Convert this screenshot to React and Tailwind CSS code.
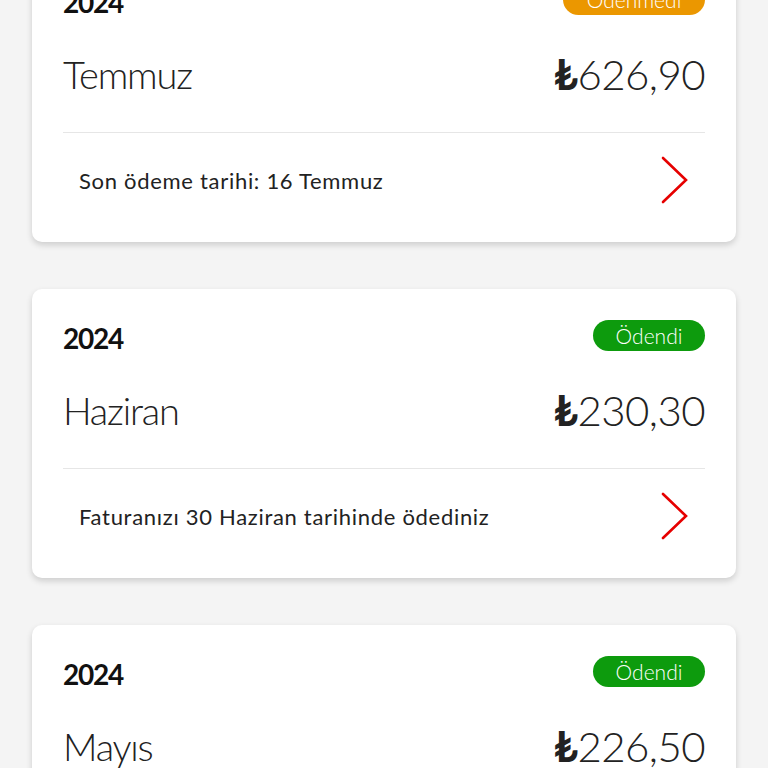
import { Fragment } from 'react'

const bills = [
  { year: '2024', month: 'Temmuz', amount: '626,90', paid: false, note: 'Son ödeme tarihi: 16 Temmuz' },
  { year: '2024', month: 'Haziran', amount: '230,30', paid: true, note: 'Faturanızı 30 Haziran tarihinde ödediniz' },
  { year: '2024', month: 'Mayıs', amount: '226,50', paid: true, note: 'Faturanızı 31 Mayıs tarihinde ödediniz' },
]

function Chevron() {
  return (
    <svg width="30" height="50" viewBox="0 0 30 50" fill="none" className="shrink-0">
      <path d="M3 3 L26 25 L3 47" stroke="#e60000" strokeWidth="2.6" strokeLinecap="round" strokeLinejoin="miter" />
    </svg>
  )
}

function BillCard({ bill }) {
  return (
    <div className="h-[289px] shrink-0 rounded-[10px] bg-white px-[31px] pt-[31px] shadow-[0_3px_6px_rgba(0,0,0,0.16)]">
      <div className="flex h-[31px] items-center justify-between">
        <p className="mt-[5px] text-[28px] leading-none font-bold tracking-[-1.2px] text-[#111]">{bill.year}</p>
        <span
          className={
            bill.paid
              ? 'flex h-[31px] w-[112px] items-center justify-center rounded-full bg-[#0d9b0d] text-[21px] font-light text-white'
              : 'flex h-[31px] w-[142px] items-center justify-center rounded-full bg-[#eb9700] text-[21px] font-light text-white'
          }
        >
          {bill.paid ? 'Ödendi' : 'Ödenmedi'}
        </span>
      </div>
      <div className="flex h-[118px] items-center justify-between border-b border-[#e6e6e6]">
        <p className="text-[38px] leading-none font-light tracking-[-1.2px] text-[#222]">{bill.month}</p>
        <p className="text-[42px] leading-none font-light tracking-[-0.6px] text-[#222]">
          <span className="font-bold">₺</span>
          {bill.amount}
        </p>
      </div>
      <div className="flex h-[94px] items-center justify-between pl-[16px] pr-[15px]">
        <p className="text-[22px] tracking-[0.7px] text-[#222]">{bill.note}</p>
        <Chevron />
      </div>
    </div>
  )
}

export default function App() {
  return (
    <div className="h-[768px] overflow-hidden bg-[#f4f4f4] font-['Lato',sans-serif]">
      <div className="mt-[-47px] flex flex-col gap-[47px] px-[32px]">
        {bills.map((bill) => (
          <Fragment key={bill.month}>
            <BillCard bill={bill} />
          </Fragment>
        ))}
      </div>
    </div>
  )
}
